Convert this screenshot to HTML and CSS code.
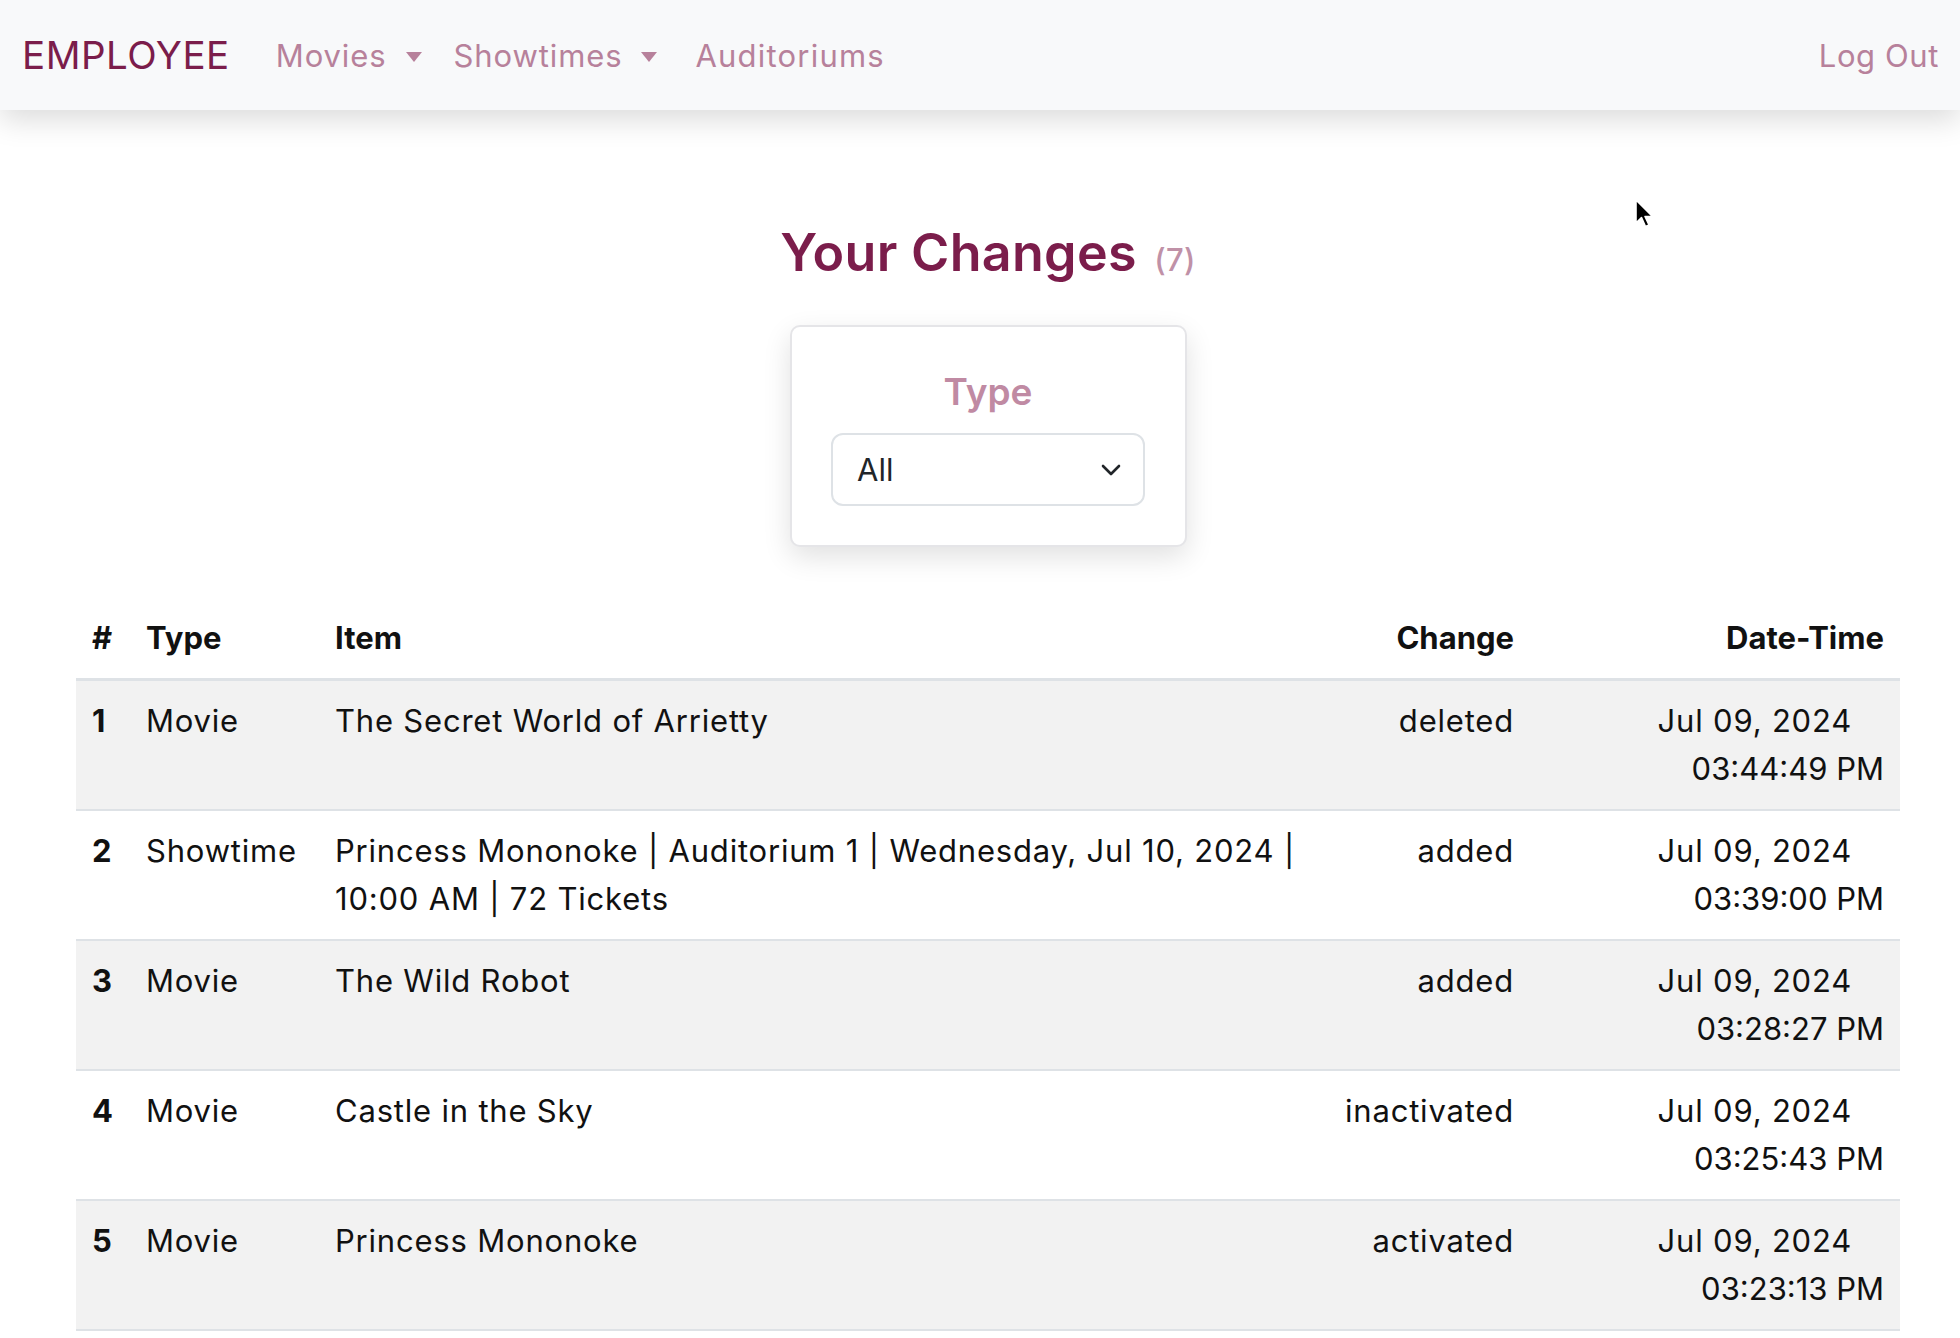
FILE: index.html
```html
<!DOCTYPE html>
<html lang="en">
<head>
<meta charset="utf-8">
<title>Your Changes</title>
<link rel="stylesheet" href="styles.css">
</head>
<body>
<nav class="navbar">
  <a class="brand" href="#">EMPLOYEE</a>
  <ul class="nav-links">
    <li><a class="nav-link dropdown" href="#">Movies</a></li>
    <li><a class="nav-link dropdown" href="#">Showtimes</a></li>
    <li><a class="nav-link wide" href="#">Auditoriums</a></li>
  </ul>
  <a class="nav-link logout" href="#">Log Out</a>
</nav>

<main class="content">
  <h2 class="title">Your Changes <small class="count">(7)</small></h2>

  <div class="filter-card">
    <label class="filter-label" for="type">Type</label>
    <div class="select">
      <span class="select-value">All</span>
      <svg class="chevron" width="20" height="12" viewBox="0 0 20 12"><path d="M2 2 L10 10 L18 2" fill="none" stroke="#212529" stroke-width="2.6" stroke-linecap="round" stroke-linejoin="round"/></svg>
    </div>
  </div>

  <table class="changes">
    <colgroup>
      <col class="c-num"><col class="c-type"><col class="c-item"><col class="c-change"><col class="c-date">
    </colgroup>
    <thead>
      <tr><th>#</th><th>Type</th><th>Item</th><th class="right">Change</th><th class="right">Date-Time</th></tr>
    </thead>
    <tbody>
      <tr class="odd"><th>1</th><td>Movie</td><td>The Secret World of Arrietty</td><td class="right">deleted</td><td class="right"><span class="d1">Jul 09, 2024</span><span class="d2">03:44:49 PM</span></td></tr>
      <tr><th>2</th><td>Showtime</td><td>Princess Mononoke | Auditorium 1 | Wednesday, Jul 10, 2024 | 10:00 AM | 72 Tickets</td><td class="right">added</td><td class="right"><span class="d1">Jul 09, 2024</span><span class="d2">03:39:00 PM</span></td></tr>
      <tr class="odd"><th>3</th><td>Movie</td><td>The Wild Robot</td><td class="right">added</td><td class="right"><span class="d1">Jul 09, 2024</span><span class="d2">03:28:27 PM</span></td></tr>
      <tr><th>4</th><td>Movie</td><td>Castle in the Sky</td><td class="right">inactivated</td><td class="right"><span class="d1">Jul 09, 2024</span><span class="d2">03:25:43 PM</span></td></tr>
      <tr class="odd"><th>5</th><td>Movie</td><td>Princess Mononoke</td><td class="right">activated</td><td class="right"><span class="d1">Jul 09, 2024</span><span class="d2">03:23:13 PM</span></td></tr>
    </tbody>
  </table>
</main>

<svg class="cursor" width="22" height="32" viewBox="0 0 22 32"><path d="M2 2 L2 25 L7.5 19.5 L11.5 28.5 L15 27 L11 18.5 L18.5 18.5 Z" fill="#000" stroke="#fff" stroke-width="1.6" stroke-linejoin="round"/></svg>
</body>
</html>
```

FILE: styles.css
```css
* { box-sizing: border-box; }

html, body {
  margin: 0;
  padding: 0;
  background: #ffffff;
  font-family: "Inter", "Open Sans", sans-serif;
  color: #212529;
}

body { position: relative; min-height: 1338px; }

a { text-decoration: none; }

.navbar {
  height: 110px;
  background: #f8f9fa;
  display: flex;
  align-items: center;
  padding: 0 21px 0 22px;
  box-shadow: 0 10px 28px rgba(0, 0, 0, 0.14);
  position: relative;
  z-index: 2;
}

.brand {
  font-size: 38.5px;
  color: #7b1d4b;
  letter-spacing: 0.5px;
  margin-right: 30px;
}

.nav-links {
  list-style: none;
  margin: 0;
  padding: 0;
  display: flex;
  flex: 1;
}

.nav-link {
  display: block;
  font-size: 31px;
  color: #b7819b;
  padding: 0 16px;
  letter-spacing: 0.9px;
}

.nav-link.wide {
  padding-left: 22px;
  letter-spacing: 1.2px;
}

.nav-link.dropdown::after {
  content: "";
  display: inline-block;
  margin-left: 19px;
  vertical-align: 5px;
  border-top: 10px solid #b7819b;
  border-left: 8px solid transparent;
  border-right: 8px solid transparent;
}

.logout { padding: 0; letter-spacing: 0.6px; }

.content {
  padding: 0 60px 0 76px;
  display: flex;
  flex-direction: column;
  align-items: center;
}

.title {
  margin: 104px 0 27px;
  font-size: 52px;
  font-weight: 600;
  line-height: 77px;
  color: #7b1d4b;
  letter-spacing: 0.3px;
}

.count {
  font-size: 31px;
  font-weight: 500;
  color: #c091a7;
  margin-left: 4px;
}

.filter-card {
  width: 397px;
  height: 222px;
  border: 2px solid #e5e5e8;
  border-radius: 10px;
  background: #fff;
  box-shadow: 0 10px 28px rgba(0, 0, 0, 0.12);
  padding: 41px 40px 0;
  display: flex;
  flex-direction: column;
  align-items: center;
  margin-bottom: 51px;
}

.filter-label {
  font-size: 37px;
  font-weight: 600;
  line-height: 48px;
  color: #c08aa3;
  margin-bottom: 17px;
}

.select {
  width: 314px;
  height: 73px;
  border: 2px solid #dee2e6;
  border-radius: 12px;
  display: flex;
  align-items: center;
  justify-content: space-between;
  padding: 0 22px 0 24px;
}

.select-value {
  font-size: 31px;
  color: #212529;
}

.changes {
  width: 1824px;
  table-layout: fixed;
  border-collapse: collapse;
  font-size: 31px;
  line-height: 48px;
  color: #111;
}

.c-num { width: 54px; }
.c-type { width: 189px; }
.c-item { width: 1007px; }
.c-change { width: 204px; }
.c-date { width: 370px; }

.changes th, .changes td {
  padding: 16px 16px;
  text-align: left;
  vertical-align: top;
}

.changes td { letter-spacing: 0.8px; }

.changes thead th {
  font-weight: 700;
  border-bottom: 3px solid #dee2e6;
}

.changes tbody th { font-weight: 700; }

.changes tbody tr { border-bottom: 2px solid #dee2e6; }

.changes tbody tr.odd { background: #f2f2f2; }

.changes .right { text-align: right; }

.d1, .d2 { display: block; }
.d1 { padding-right: 32px; }
.d2 { letter-spacing: 0; }

.cursor {
  position: absolute;
  left: 1634px;
  top: 198px;
}
```
